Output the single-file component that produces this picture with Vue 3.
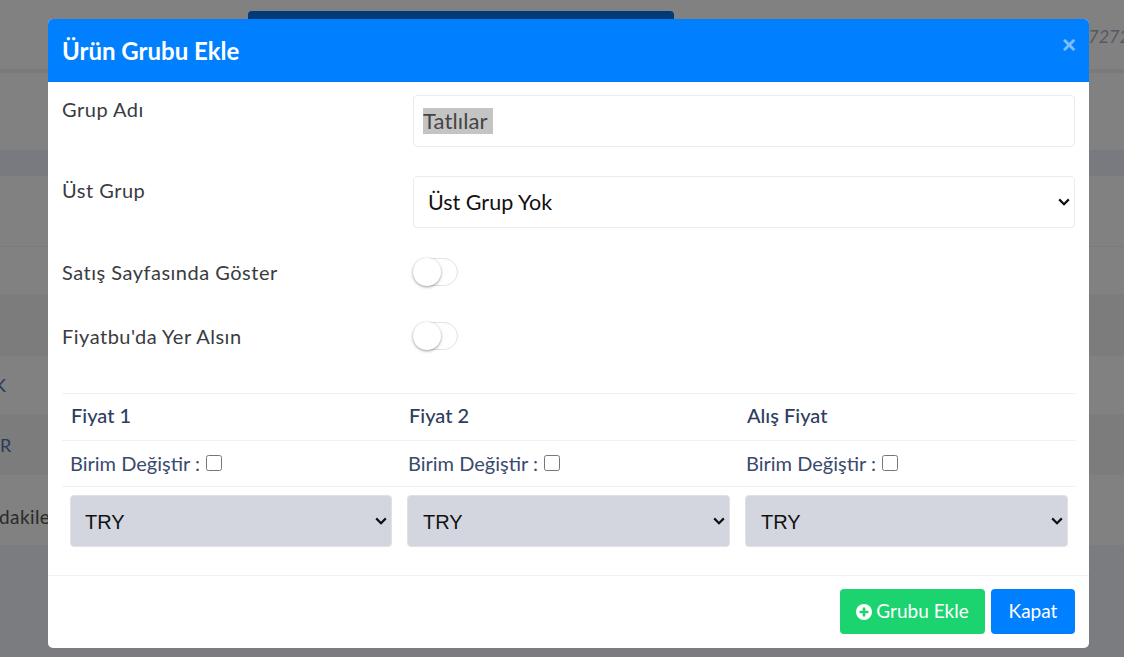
<template>
  <div class="page">
    <div class="bg-top">
      <div class="bg-button"></div>
      <span class="bg-phone">7272</span>
    </div>
    <div class="bg-line"></div>
    <div class="bg-row h77"></div>
    <div class="bg-band"></div>
    <div class="bg-row h71 ruled"></div>
    <div class="bg-row h48 ruled"></div>
    <div class="bg-row h61 dim"></div>
    <div class="bg-row h59 ruled"><span class="bg-text k">K</span></div>
    <div class="bg-row h60 dim"><span class="bg-text r">R</span></div>
    <div class="bg-row h70"><span class="bg-text note">dakiler</span></div>
    <div class="bg-rest"></div>

    <div class="modal">
      <header class="modal-header">
        <h4 class="modal-title">Ürün Grubu Ekle</h4>
        <button class="close" type="button">×</button>
      </header>

      <div class="modal-body">
        <div class="form-row">
          <label class="form-label">Grup Adı</label>
          <div class="form-input"><span class="selected">Tatlılar</span></div>
        </div>
        <div class="form-row">
          <label class="form-label">Üst Grup</label>
          <select class="form-select">
            <option>Üst Grup Yok</option>
          </select>
        </div>
        <div class="toggle-row first">
          <label class="form-label">Satış Sayfasında Göster</label>
          <span class="toggle"><span class="knob"></span></span>
        </div>
        <div class="toggle-row">
          <label class="form-label">Fiyatbu'da Yer Alsın</label>
          <span class="toggle"><span class="knob"></span></span>
        </div>

        <table class="price-table">
          <thead>
            <tr>
              <th v-for="col in priceCols" :key="col">{{ col }}</th>
            </tr>
          </thead>
          <tbody>
            <tr class="unit-row">
              <td v-for="col in priceCols" :key="col">
                Birim Değiştir : <input type="checkbox" class="unit-check" />
              </td>
            </tr>
            <tr class="currency-row">
              <td v-for="col in priceCols" :key="col">
                <select class="currency-select">
                  <option>TRY</option>
                </select>
              </td>
            </tr>
          </tbody>
        </table>
      </div>

      <footer class="modal-footer">
        <button class="btn btn-green" type="button">
          <svg class="plus-icon" viewBox="0 0 16 16">
            <circle cx="8" cy="8" r="8" fill="#fff" />
            <path d="M8 3.6v8.8M3.6 8h8.8" stroke="#1bd46f" stroke-width="2.6" />
          </svg>
          Grubu Ekle
        </button>
        <button class="btn btn-blue" type="button">Kapat</button>
      </footer>
    </div>
  </div>
</template>

<script setup>
const priceCols = ["Fiyat 1", "Fiyat 2", "Alış Fiyat"];
</script>

<style>
html,
body {
  margin: 0;
  overflow: hidden;
}
</style>

<style scoped>
.page {
  position: relative;
  width: 1124px;
  height: 657px;
  overflow: hidden;
  display: flex;
  flex-direction: column;
  background: #818181;
  font-family: "Lato", "Noto Sans", sans-serif;
}
.bg-top {
  height: 69px;
  flex: none;
  display: flex;
  justify-content: space-between;
  padding: 11px 0 0 248px;
  box-sizing: border-box;
}
.bg-button {
  width: 426px;
  height: 30px;
  background: #003a78;
  border-radius: 4px;
}
.bg-phone {
  font-size: 18px;
  font-style: italic;
  color: #555963;
  margin-top: 14px;
  margin-right: -6px;
}
.bg-line {
  height: 4px;
  flex: none;
  background: #7a7a7a;
}
.bg-row {
  flex: none;
  display: flex;
  align-items: center;
  box-sizing: border-box;
}
.h77 {
  height: 77px;
}
.h71 {
  height: 71px;
}
.h48 {
  height: 48px;
}
.h61 {
  height: 61px;
}
.h60 {
  height: 60px;
}
.h59 {
  height: 59px;
}
.h70 {
  height: 70px;
}
.ruled {
  border-bottom: 1px solid #7b7b7b;
}
.dim {
  background: #7c7c7c;
}
.bg-band {
  height: 26px;
  flex: none;
  background: #797a7f;
}
.bg-rest {
  flex: 1;
  background: #7b7c80;
}
.bg-text {
  font-size: 18px;
  white-space: nowrap;
}
.k {
  margin-left: -6px;
  color: #2a3a58;
}
.r {
  margin-left: 0;
  color: #2a3a58;
}
.note {
  margin-left: -1px;
  margin-top: 12px;
  font-size: 19px;
  color: #2a2a2a;
  letter-spacing: 0.4px;
}

.modal {
  position: absolute;
  top: 19px;
  left: 48px;
  width: 1041px;
  height: 629px;
  background: #fff;
  border-radius: 5px;
  overflow: hidden;
  display: flex;
  flex-direction: column;
}
.modal-header {
  height: 63px;
  flex: none;
  background: #0080ff;
  display: flex;
  align-items: flex-start;
  justify-content: space-between;
  padding: 0 13px 0 14px;
}
.modal-title {
  margin: 0;
  font-size: 24px;
  font-weight: 700;
  line-height: 63px;
  color: #fff;
}
.close {
  border: 0;
  padding: 0;
  background: none;
  color: #fff;
  opacity: 0.5;
  font: 700 24px/52px "Liberation Sans", sans-serif;
}
.modal-body {
  flex: 1;
  padding: 13px 14px 0;
}
.form-row {
  display: grid;
  grid-template-columns: 351px 662px;
  height: 52px;
  margin-bottom: 29px;
}
.form-label {
  font-size: 20px;
  letter-spacing: 0.5px;
  line-height: 28px;
  color: #3a3b3f;
}
.form-input {
  border: 1px solid #e9ecef;
  border-radius: 4px;
  padding: 12px 9px;
  font-size: 22px;
  line-height: 26px;
  color: #454545;
  letter-spacing: 0.1px;
}
.selected {
  display: inline-block;
  background: #c4c4c4;
  height: 26px;
  padding-right: 5px;
}
.form-select,
.currency-select {
  appearance: none;
  background-image: url("data:image/svg+xml,%3Csvg xmlns='http://www.w3.org/2000/svg' viewBox='0 0 12 8'%3E%3Cpath d='M1.2 1.4 6 6.2l4.8-4.8' fill='none' stroke='%23111' stroke-width='2.2'/%3E%3C/svg%3E");
  background-repeat: no-repeat;
  background-size: 12px 8px;
  background-position: right 4px center;
}
.form-select {
  border: 1px solid #e9ecef;
  border-radius: 4px;
  background-color: #fff;
  padding: 0 14px;
  font: 21.5px "Lato", sans-serif;
  color: #111;
}
.toggle-row {
  display: grid;
  grid-template-columns: 351px 45px;
  align-items: center;
  height: 28px;
  margin-bottom: 36px;
}
.toggle-row.first {
  margin-top: 30px;
}
.toggle {
  display: block;
  width: 45px;
  height: 28px;
  box-sizing: border-box;
  border: 1px solid #e3e3e3;
  border-radius: 14px;
  background: #fff;
}
.knob {
  display: block;
  width: 28px;
  height: 28px;
  margin: -1px 0 0 -1px;
  border-radius: 50%;
  background: #fff;
  box-shadow: 0 1px 3px rgba(0, 0, 0, 0.4);
}
.price-table {
  width: 1014px;
  margin-top: 43px;
  table-layout: fixed;
  border-collapse: collapse;
}
.price-table th {
  height: 42px;
  padding: 0 8px 4px 9px;
  border-top: 1px solid #f0f1f3;
  text-align: left;
  font-size: 20px;
  font-weight: 500;
  color: #2e3d5f;
}
.unit-row td {
  height: 43px;
  padding: 0 8px 2px;
  border-top: 1px solid #f0f1f3;
  font-size: 20px;
  color: #3a4a6e;
}
.unit-check {
  width: 16px;
  height: 16px;
  margin: 0 0 0 1px;
}
.currency-row td {
  padding: 8px 8px 0;
  border-top: 1px solid #f0f1f3;
}
.currency-row td + td .currency-select {
  margin-left: -1px;
  width: calc(100% + 1px);
  padding-left: 15px;
}
.currency-select {
  display: block;
  width: 100%;
  height: 52px;
  padding: 1px 14px 0;
  border: 1px solid #dfe1e6;
  border-radius: 4px;
  background-color: #d3d6de;
  font: 20px "Liberation Sans", sans-serif;
  color: #111;
}
.modal-footer {
  height: 73px;
  flex: none;
  box-sizing: border-box;
  border-top: 1px solid #f0f1f3;
  display: flex;
  justify-content: flex-end;
  gap: 6px;
  padding: 13px 14px;
}
.btn {
  height: 45px;
  border: 0;
  border-radius: 4px;
  padding: 0 0 2px;
  font: 19px "Lato", sans-serif;
  color: #fff;
  display: flex;
  align-items: center;
  justify-content: center;
}
.btn-green {
  width: 145px;
  gap: 4px;
  background: #1bd46f;
}
.btn-blue {
  width: 84px;
  background: #0080ff;
}
.plus-icon {
  width: 16px;
  height: 16px;
  margin-top: 2px;
}
</style>
